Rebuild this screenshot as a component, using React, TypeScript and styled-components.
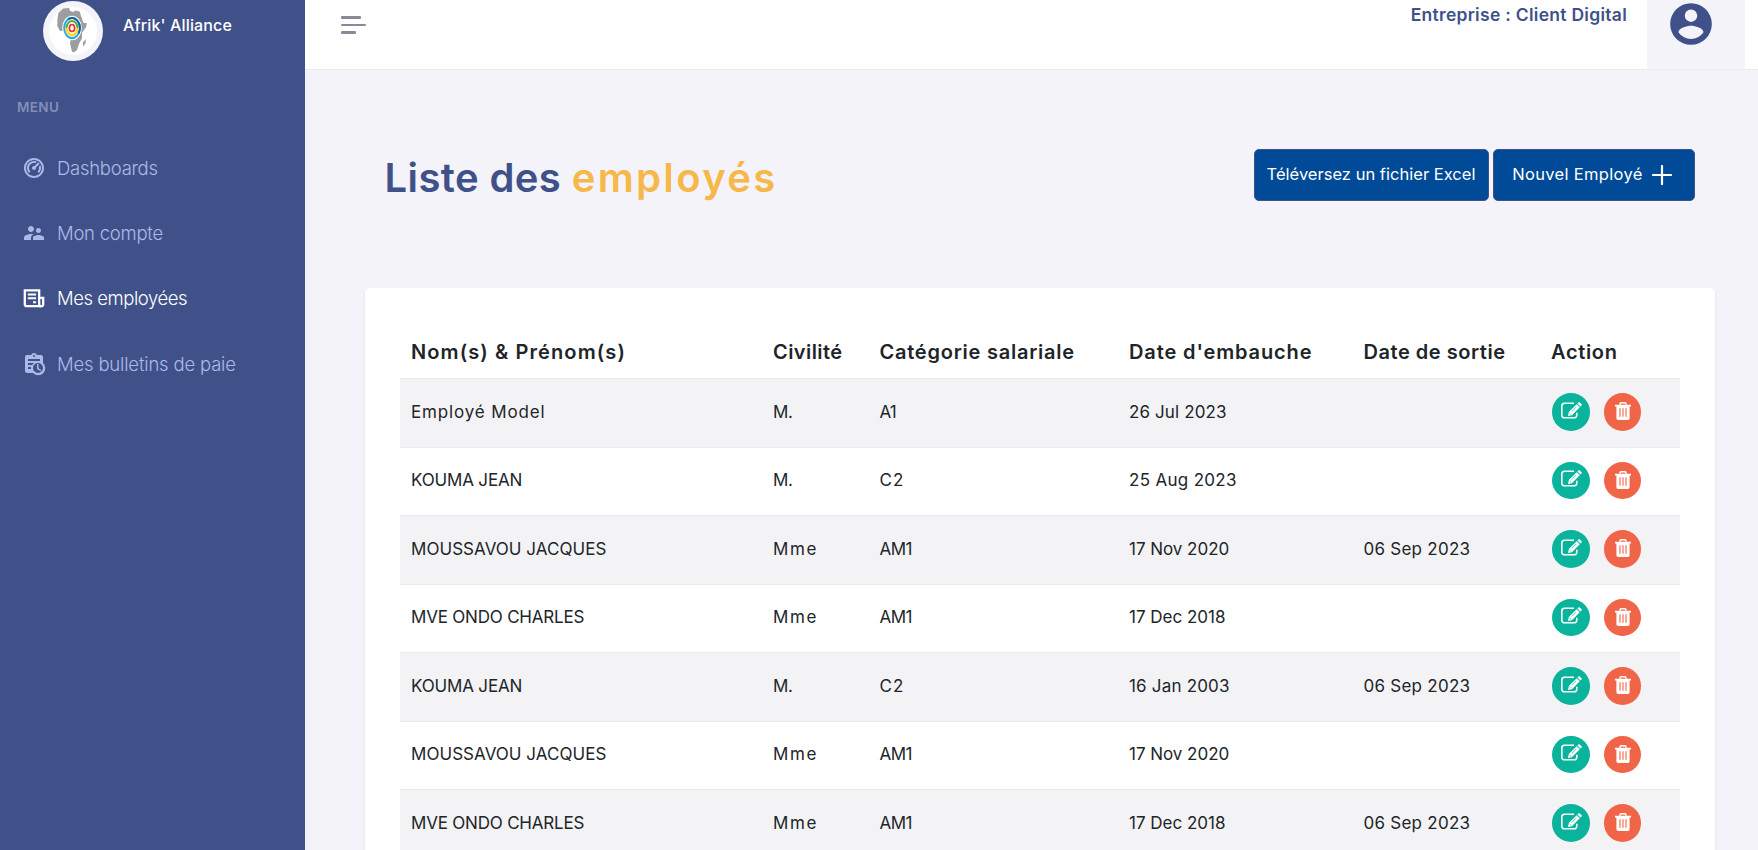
import React from "react";
import styled, { createGlobalStyle } from "styled-components";
import { RiDashboard2Line } from "react-icons/ri";
import { MdSupervisorAccount } from "react-icons/md";

const GlobalStyle = createGlobalStyle`
  *, *::before, *::after { box-sizing: border-box; }
  body {
    margin: 0;
    background: #f3f3f9;
    color: #212529;
    font-family: Inter, "Open Sans", sans-serif;
  }
  h1, p, ul { margin: 0; padding: 0; }
`;

const Shell = styled.div`
  display: flex;
  height: 850px;
  overflow: hidden;
`;

const Sidebar = styled.aside`
  flex: 0 0 305px;
  background: #405189;
  color: #abb9e8;
`;

const Brand = styled.div`
  display: flex;
  gap: 20px;
  padding: 1px 0 0 43px;
`;

const BrandName = styled.span`
  color: #fff;
  font-size: 16px;
  font-weight: 500;
  line-height: 48px;
  letter-spacing: 0.15px;
`;

const MenuTitle = styled.p`
  margin-top: 36px;
  padding-left: 17px;
  color: #838fb9;
  font-size: 13.5px;
  font-weight: 600;
  line-height: 20px;
  letter-spacing: 0.35px;
`;

const Nav = styled.ul`
  margin-top: 18px;
  list-style: none;
`;

const NavItem = styled.li<{ $active?: boolean; $track: number }>`
  display: flex;
  align-items: center;
  gap: 11.5px;
  height: 65.4px;
  padding-left: 21.5px;
  color: ${(p) => (p.$active ? "#fff" : "#abb9e8")};
  font-size: 18.5px;
  font-weight: 350;
  letter-spacing: ${(p) => p.$track}px;
  white-space: nowrap;

  svg {
    width: 24px;
    height: 24px;
  }
`;

const Main = styled.main`
  flex: 1;
  min-width: 0;
`;

const Topbar = styled.header`
  display: flex;
  height: 70px;
  padding: 0 13px 0 36px;
  background: #fff;
  border-bottom: 1px solid #e9ebec;
`;

const Hamburger = styled.div`
  display: flex;
  flex-direction: column;
  gap: 5px;
  padding-top: 16px;
`;

const Bar = styled.span<{ $width: number; $thin?: boolean }>`
  width: ${(p) => p.$width}px;
  height: ${(p) => (p.$thin ? 2 : 3)}px;
  border-radius: 1px;
  background: #878a99;
`;

const Company = styled.p`
  margin-left: auto;
  margin-right: 20px;
  color: #405189;
  font-size: 17.5px;
  font-weight: 600;
  line-height: 30px;
  letter-spacing: 0.28px;
`;

const UserBox = styled.div`
  display: flex;
  justify-content: center;
  width: 98px;
  height: 69px;
  padding-right: 10px;
  background: #f3f3f9;
  color: #405189;

  svg {
    flex: none;
    width: 50px;
    height: 50px;
    margin-top: -1px;
  }
`;

const PageHead = styled.div`
  display: flex;
  justify-content: space-between;
  align-items: flex-start;
  height: 218px;
  padding: 79px 63px 0 79.5px;
`;

const Title = styled.h1`
  color: #405189;
  font-size: 40px;
  font-weight: 600;
  line-height: 58px;
  letter-spacing: 0.4px;
  white-space: pre;
`;

const Highlight = styled.span`
  color: #f7b84b;
  letter-spacing: 2.35px;
`;

const Actions = styled.div`
  display: flex;
  gap: 4px;
`;

const Button = styled.button<{ $width: number; $track: number }>`
  display: flex;
  align-items: center;
  justify-content: center;
  gap: 9px;
  width: ${(p) => p.$width}px;
  height: 52px;
  padding: 0 1px 3px 0;
  border: 1px solid #405189;
  border-radius: 5px;
  background: #004a98;
  color: #fff;
  font: 400 16.5px Inter, sans-serif;
  letter-spacing: ${(p) => p.$track}px;
  white-space: nowrap;

  svg {
    margin: 2px 3px 0 0;
  }
`;

const Card = styled.section`
  width: 1350px;
  height: 640px;
  margin-left: 60px;
  padding: 40px 35px 0;
  border-radius: 5px;
  background: #fff;
  box-shadow: 0 1px 2px rgba(56, 65, 74, 0.15);
`;

const gridColumns = "362px 106.5px 249.5px 234.5px 187.5px 1fr";

const HeadRow = styled.div`
  display: grid;
  grid-template-columns: ${gridColumns};
  height: 51px;
  border-bottom: 1px solid #e9ebec;
`;

const HeadCell = styled.div<{ $track: number }>`
  padding-left: 11px;
  font-size: 20px;
  font-weight: 600;
  line-height: 49px;
  letter-spacing: ${(p) => p.$track}px;
  white-space: nowrap;
`;

const Row = styled.div`
  display: grid;
  grid-template-columns: ${gridColumns};
  align-items: center;
  height: 68.5px;
  border-bottom: 1px solid #e9ebec;

  &:nth-child(even) {
    background: #f3f3f5;
  }
`;

const Cell = styled.div<{ $track: number }>`
  padding: 0 0 2.5px 11px;
  font-size: 17px;
  letter-spacing: ${(p) => p.$track}px;
  white-space: nowrap;
`;

const ActionCell = styled.div`
  display: flex;
  gap: 14px;
  padding: 0 0 2px 12px;
`;

const RoundButton = styled.span<{ $kind: "edit" | "remove" }>`
  display: flex;
  align-items: center;
  justify-content: center;
  width: ${(p) => (p.$kind === "edit" ? 38 : 37)}px;
  height: 37.5px;
  padding-bottom: ${(p) => (p.$kind === "edit" ? 3 : 1)}px;
  border-radius: 50%;
  background: ${(p) => (p.$kind === "edit" ? "#0ab39c" : "#f06548")};
  color: #fff;
`;

const Logo = () => (
  <svg width="60" height="60" viewBox="0 0 60 60">
    <circle cx="30" cy="30" r="30" fill="#f3f3f9" />
    <circle cx="30" cy="30" r="24" fill="#fff" />
    <path
      fill="#9c9d9f"
      d="M15.3 12 20.3 7.5 26 7l1.2 2.9 3.3 1 1.5-1.3 4.6 1 1.6 5 2.2 6.1 3.6.6-1 4-4 5.4v5.6l-2.7 5L34 49l-3 2.3-2-.6-2-8.4.7-4-2.4-4.3-2.3-4.3-6 .3-2.7-5 .1-5.7z"
    />
    <path fill="#9c9d9f" d="m43 37.7-.6 4.6-2.1 3.4-.5-4z" />
    <ellipse cx="29" cy="27" rx="9.8" ry="12.200" fill="#fff" />
    <ellipse cx="29" cy="27" rx="7.8" ry="10.1" fill="none" stroke="#24a9e1" strokeWidth="2" />
    <path d="M25 18.3A7.8 10.1 0 0 1 35.5 32.5" fill="none" stroke="#1d5da8" strokeWidth="2" />
    <path d="M23.5 27a5.5 7 0 0 1 11 0" fill="none" stroke="#5cae3c" strokeWidth="2" />
    <path d="M23.5 27a5.5 7 0 0 0 11 0" fill="none" stroke="#ffd51f" strokeWidth="2.4" />
    <ellipse cx="29" cy="27" rx="2.6" ry="3.5" fill="#fff" stroke="#e4312f" strokeWidth="1.7" />
  </svg>
);

const AccountIcon = () => (
  <svg viewBox="0 0 24 24" fill="currentColor">
    <path d="M12 19.2c-2.5 0-4.71-1.28-6-3.2.03-2 4-3.1 6-3.1s5.97 1.1 6 3.1a7.23 7.23 0 0 1-6 3.2M12 5a3 3 0 1 1 0 6 3 3 0 0 1 0-6m0-3a10 10 0 1 0 0 20 10 10 0 0 0 0-20z" />
  </svg>
);

const NewsIcon = () => (
  <svg viewBox="0 0 24 24" fill="none" stroke="currentColor" strokeWidth="2.3">
    <path d="M17.2 20.2H4.8a2 2 0 0 1-2-2V4.300h14.400v13.900a2 2 0 0 0 4 0v-6.4h-4" />
    <path d="M17.2 20.2h2.2" />
    <path d="M5.8 8.500h8.3M5.8 12.300h8.3M11 16.200h3.1" strokeWidth="2" />
  </svg>
);

const ClipboardIcon = () => (
  <svg viewBox="0 0 24 24" fill="currentColor">
    <path d="M21 11.11V5a2 2 0 0 0-2-2h-4.18C14.4 1.84 13.3 1 12 1s-2.4.84-2.82 2H5a2 2 0 0 0-2 2v14a2 2 0 0 0 2 2h6.11A7 7 0 1 0 21 11.11zM12 3a1 1 0 1 1 0 2 1 1 0 0 1 0-2zM6 7h12v2H6V7zm0 4h6.1c-.58.4-1.1.87-1.55 1.4L10 13H6v-2zm3.08 6H6v-2h3.07a7 7 0 0 0 .01 2zM16 21a5 5 0 1 1 0-10 5 5 0 0 1 0 10zm.5-4.75 2.86 1.69-.75 1.22L15 17v-5h1.5v4.25z" />
  </svg>
);

const PlusIcon = () => (
  <svg width="20" height="20" viewBox="0 0 20 20" stroke="currentColor" strokeWidth="2.2" strokeLinecap="round">
    <path d="M10 1v18M1 10h18" />
  </svg>
);

const EditIcon = () => (
  <svg width="21" height="17" viewBox="0 0 21 17">
    <path
      d="M13 1.3H3.5A2.700 2.700 0 0 0 .8 4v9.2a2.6 2.6 0 0 0 2.7 2.6h9.6a2.6 2.6 0 0 0 2.7-2.6v-2.5"
      fill="none"
      stroke="currentColor"
      strokeWidth="1.6"
    />
    <path d="m15.700 2.200 3.100 3.100-7.9 7.900-3.9.8.8-3.900z" fill="currentColor" />
    <path d="m16.400 1.500 1-1a1 1 0 0 1 1.4 0l1.700 1.700a1 1 0 0 1 0 1.4l-1 1z" fill="currentColor" />
    <path d="m10.7 9.5 4.4-4.400M8.6 11l1.4 1.4" stroke="#0ab39c" strokeWidth=".7" />
  </svg>
);

const TrashIcon = () => (
  <svg width="16" height="18" viewBox="0 0 16 18">
    <path d="M5 2.8V2a1.2 1.2 0 0 1 1.2-1.2h3.6A1.2 1.2 0 0 1 11 2v.8" fill="none" stroke="currentColor" strokeWidth="1.5" />
    <path d="M0 2.8h16v1.7h-1.4v11.7a1.7 1.7 0 0 1-1.7 1.7H3.1a1.7 1.7 0 0 1-1.7-1.7V4.5H0z" fill="currentColor" />
    <path d="M5 6.2v8.6M8 6.2v8.6M11 6.2v8.6" stroke="#f06548" strokeWidth="1.1" />
  </svg>
);

type Text = [label: string, track: number];

const headings: Text[] = [
  ["Nom(s) & Prénom(s)", 1.1],
  ["Civilité", 0.43],
  ["Catégorie salariale", 0.76],
  ["Date d'embauche", 0.88],
  ["Date de sortie", 0.53],
  ["Action", 0.67],
];

const model: Text = ["Employé Model", 0.85];
const kouma: Text = ["KOUMA JEAN", -0.17];
const moussavou: Text = ["MOUSSAVOU JACQUES", 0.04];
const mve: Text = ["MVE ONDO CHARLES", -0.2];
const mr: Text = ["M.", -0.36];
const mrs: Text = ["Mme", 1.6];
const a1: Text = ["A1", -1];
const c2: Text = ["C2", 1];
const am1: Text = ["AM1", -0.54];
const nov: Text = ["17 Nov 2020", -0.03];
const dec: Text = ["17 Dec 2018", 0];
const sep: Text = ["06 Sep 2023", 0.25];
const none: Text = ["", 0];

const employees: Text[][] = [
  [model, mr, a1, ["26 Jul 2023", 0.12], none],
  [kouma, mr, c2, ["25 Aug 2023", 0.31], none],
  [moussavou, mrs, am1, nov, sep],
  [mve, mrs, am1, dec, none],
  [kouma, mr, c2, ["16 Jan 2003", 0.19], sep],
  [moussavou, mrs, am1, nov, none],
  [mve, mrs, am1, dec, sep],
];

export default function App() {
  return (
    <>
      <GlobalStyle />
      <Shell>
        <Sidebar>
          <Brand>
            <Logo />
            <BrandName>Afrik' Alliance</BrandName>
          </Brand>
          <MenuTitle>MENU</MenuTitle>
          <Nav>
            <NavItem $track={-0.26}>
              <RiDashboard2Line />
              Dashboards
            </NavItem>
            <NavItem $track={-0.25}>
              <MdSupervisorAccount />
              Mon compte
            </NavItem>
            <NavItem $active $track={-0.46}>
              <NewsIcon />
              Mes employées
            </NavItem>
            <NavItem $track={-0.18}>
              <ClipboardIcon />
              Mes bulletins de paie
            </NavItem>
          </Nav>
        </Sidebar>
        <Main>
          <Topbar>
            <Hamburger>
              <Bar $width={20} />
              <Bar $width={25} $thin />
              <Bar $width={15} />
            </Hamburger>
            <Company>Entreprise : Client Digital</Company>
            <UserBox>
              <AccountIcon />
            </UserBox>
          </Topbar>
          <PageHead>
            <Title>
              Liste des <Highlight>employés</Highlight>
            </Title>
            <Actions>
              <Button $width={235} $track={0.02}>
                Téléversez un fichier Excel
              </Button>
              <Button $width={202} $track={0.33}>
                Nouvel Employé
                <PlusIcon />
              </Button>
            </Actions>
          </PageHead>
          <Card>
            <HeadRow>
              {headings.map(([label, track]) => (
                <HeadCell key={label} $track={track}>
                  {label}
                </HeadCell>
              ))}
            </HeadRow>
            {employees.map((cells, i) => (
              <Row key={i}>
                {cells.map(([label, track], j) => (
                  <Cell key={j} $track={track}>
                    {label}
                  </Cell>
                ))}
                <ActionCell>
                  <RoundButton $kind="edit">
                    <EditIcon />
                  </RoundButton>
                  <RoundButton $kind="remove">
                    <TrashIcon />
                  </RoundButton>
                </ActionCell>
              </Row>
            ))}
          </Card>
        </Main>
      </Shell>
    </>
  );
}
